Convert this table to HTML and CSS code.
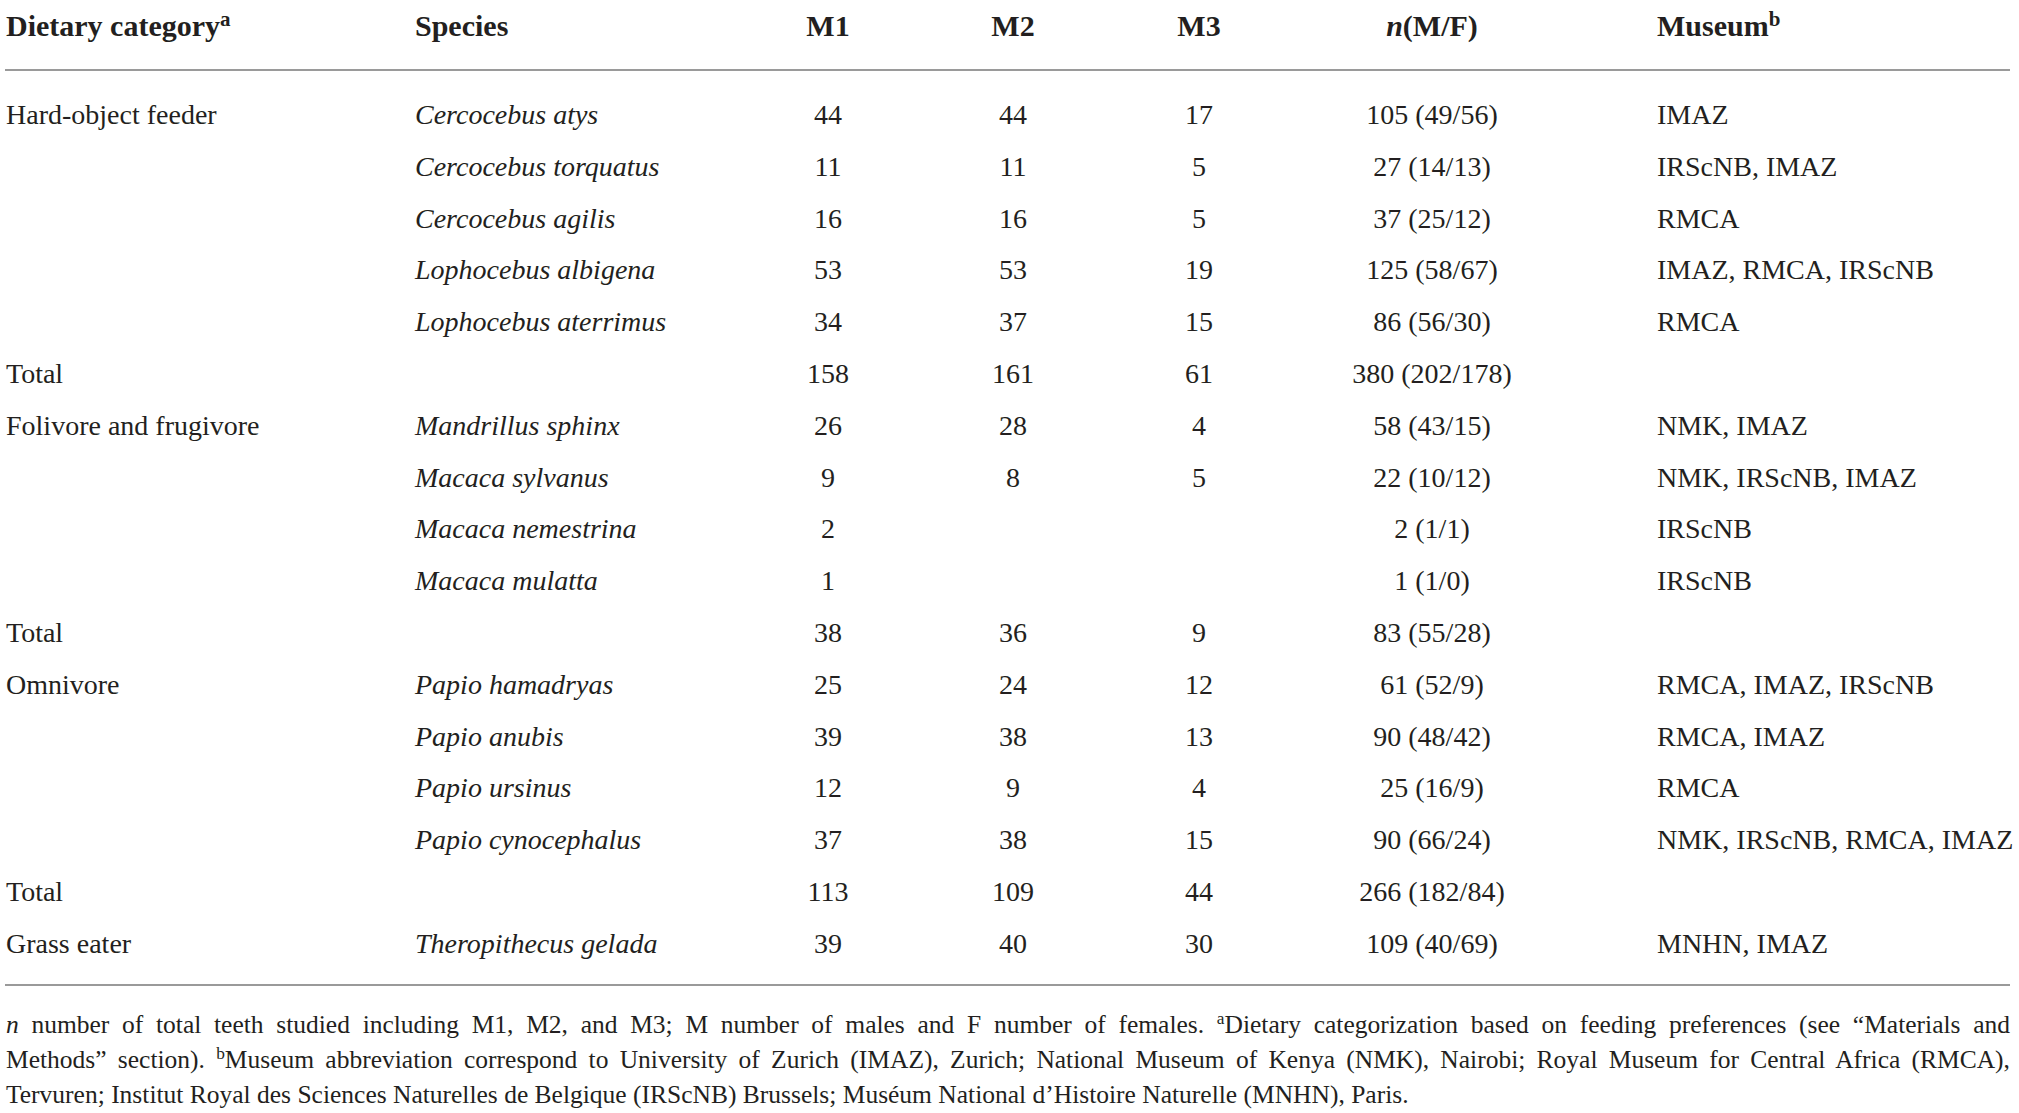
FILE: index.html
```html
<!DOCTYPE html>
<html lang="en">
<head>
	<meta charset="UTF-8">
	<title>Table 1</title>
	<link rel="stylesheet" href="styles.css">
</head>
<body>
	<div class="wrap">
		<table class="data">
			<colgroup>
				<col class="c-cat">
				<col class="c-sp">
				<col class="c-m1">
				<col class="c-m2">
				<col class="c-m3">
				<col class="c-n">
				<col class="c-mus">
			</colgroup>
			<thead>
				<tr>
					<th class="left">Dietary category<sup>a</sup></th>
					<th class="left">Species</th>
					<th>M1</th>
					<th>M2</th>
					<th>M3</th>
					<th><i>n</i>(M/F)</th>
					<th class="left mus">Museum<sup>b</sup></th>
				</tr>
			</thead>
			<tbody>
				<tr class="first">
					<td class="left">Hard-object feeder</td>
					<td class="left sp">Cercocebus atys</td>
					<td>44</td><td>44</td><td>17</td><td>105 (49/56)</td>
					<td class="left mus">IMAZ</td>
				</tr>
				<tr>
					<td></td>
					<td class="left sp">Cercocebus torquatus</td>
					<td>11</td><td>11</td><td>5</td><td>27 (14/13)</td>
					<td class="left mus">IRScNB, IMAZ</td>
				</tr>
				<tr>
					<td></td>
					<td class="left sp">Cercocebus agilis</td>
					<td>16</td><td>16</td><td>5</td><td>37 (25/12)</td>
					<td class="left mus">RMCA</td>
				</tr>
				<tr>
					<td></td>
					<td class="left sp">Lophocebus albigena</td>
					<td>53</td><td>53</td><td>19</td><td>125 (58/67)</td>
					<td class="left mus">IMAZ, RMCA, IRScNB</td>
				</tr>
				<tr>
					<td></td>
					<td class="left sp">Lophocebus aterrimus</td>
					<td>34</td><td>37</td><td>15</td><td>86 (56/30)</td>
					<td class="left mus">RMCA</td>
				</tr>
				<tr>
					<td class="left">Total</td>
					<td></td>
					<td>158</td><td>161</td><td>61</td><td>380 (202/178)</td>
					<td></td>
				</tr>
				<tr>
					<td class="left">Folivore and frugivore</td>
					<td class="left sp">Mandrillus sphinx</td>
					<td>26</td><td>28</td><td>4</td><td>58 (43/15)</td>
					<td class="left mus">NMK, IMAZ</td>
				</tr>
				<tr>
					<td></td>
					<td class="left sp">Macaca sylvanus</td>
					<td>9</td><td>8</td><td>5</td><td>22 (10/12)</td>
					<td class="left mus">NMK, IRScNB, IMAZ</td>
				</tr>
				<tr>
					<td></td>
					<td class="left sp">Macaca nemestrina</td>
					<td>2</td><td></td><td></td><td>2 (1/1)</td>
					<td class="left mus">IRScNB</td>
				</tr>
				<tr>
					<td></td>
					<td class="left sp">Macaca mulatta</td>
					<td>1</td><td></td><td></td><td>1 (1/0)</td>
					<td class="left mus">IRScNB</td>
				</tr>
				<tr>
					<td class="left">Total</td>
					<td></td>
					<td>38</td><td>36</td><td>9</td><td>83 (55/28)</td>
					<td></td>
				</tr>
				<tr>
					<td class="left">Omnivore</td>
					<td class="left sp">Papio hamadryas</td>
					<td>25</td><td>24</td><td>12</td><td>61 (52/9)</td>
					<td class="left mus">RMCA, IMAZ, IRScNB</td>
				</tr>
				<tr>
					<td></td>
					<td class="left sp">Papio anubis</td>
					<td>39</td><td>38</td><td>13</td><td>90 (48/42)</td>
					<td class="left mus">RMCA, IMAZ</td>
				</tr>
				<tr>
					<td></td>
					<td class="left sp">Papio ursinus</td>
					<td>12</td><td>9</td><td>4</td><td>25 (16/9)</td>
					<td class="left mus">RMCA</td>
				</tr>
				<tr>
					<td></td>
					<td class="left sp">Papio cynocephalus</td>
					<td>37</td><td>38</td><td>15</td><td>90 (66/24)</td>
					<td class="left mus">NMK, IRScNB, RMCA, IMAZ</td>
				</tr>
				<tr>
					<td class="left">Total</td>
					<td></td>
					<td>113</td><td>109</td><td>44</td><td>266 (182/84)</td>
					<td></td>
				</tr>
				<tr class="last">
					<td class="left">Grass eater</td>
					<td class="left sp">Theropithecus gelada</td>
					<td>39</td><td>40</td><td>30</td><td>109 (40/69)</td>
					<td class="left mus">MNHN, IMAZ</td>
				</tr>
			</tbody>
		</table>
		<div class="notes">
			<span class="line"><i>n</i> number of total teeth studied including M1, M2, and M3; M number of males and F number of females. <sup>a</sup>Dietary categorization based on feeding preferences (see “Materials and</span>
			<span class="line">Methods” section). <sup>b</sup>Museum abbreviation correspond to University of Zurich (IMAZ), Zurich; National Museum of Kenya (NMK), Nairobi; Royal Museum for Central Africa (RMCA),</span>
			<span class="line end">Tervuren; Institut Royal des Sciences Naturelles de Belgique (IRScNB) Brussels; Muséum National d’Histoire Naturelle (MNHN), Paris.</span>
		</div>
	</div>
</body>
</html>
```

FILE: styles.css
```css
body {
	margin: 0;
	background: #fff;
	color: #231f20;
	font-family: "Liberation Serif", "Times New Roman", serif;
}

.wrap {
	width: 2005px;
	padding-left: 5px;
}

.data {
	width: 2005px;
	table-layout: fixed;
	border-collapse: collapse;
	font-size: 28px;
}

.c-cat { width: 409px; }
.c-sp { width: 321px; }
.c-m1 { width: 186px; }
.c-m2 { width: 184px; }
.c-m3 { width: 188px; }
.c-n { width: 278px; }
.c-mus { width: 439px; }

.data th,
.data td {
	padding: 0 1px;
	text-align: center;
	white-space: nowrap;
	font-weight: normal;
}

.data th {
	height: 65px;
	padding-bottom: 0;
	vertical-align: top;
	padding-top: 4px;
	font-weight: bold;
	font-size: 30px;
	line-height: 44px;
	border-bottom: 2px solid #9a9a9a;
}

.data td {
	height: 51.8px;
	line-height: 51.8px;
	vertical-align: middle;
}

.data .first td {
	padding-top: 18px;
}

.data .last td {
	padding-bottom: 14px;
	border-bottom: 2px solid #9a9a9a;
}

.data .left {
	text-align: left;
}

.data .sp {
	font-style: italic;
}

.data .mus {
	padding-left: 86px;
}

sup {
	font-size: 70%;
	line-height: 0;
	vertical-align: 0.5em;
}

.notes {
	padding: 21px 0 0 1px;
	font-size: 25.5px;
	line-height: 35px;
}

.notes sup {
	font-size: 68%;
}

.notes .line {
	display: block;
	text-align: justify;
	text-align-last: justify;
	white-space: nowrap;
}

.notes .line.end {
	text-align-last: left;
}
```
